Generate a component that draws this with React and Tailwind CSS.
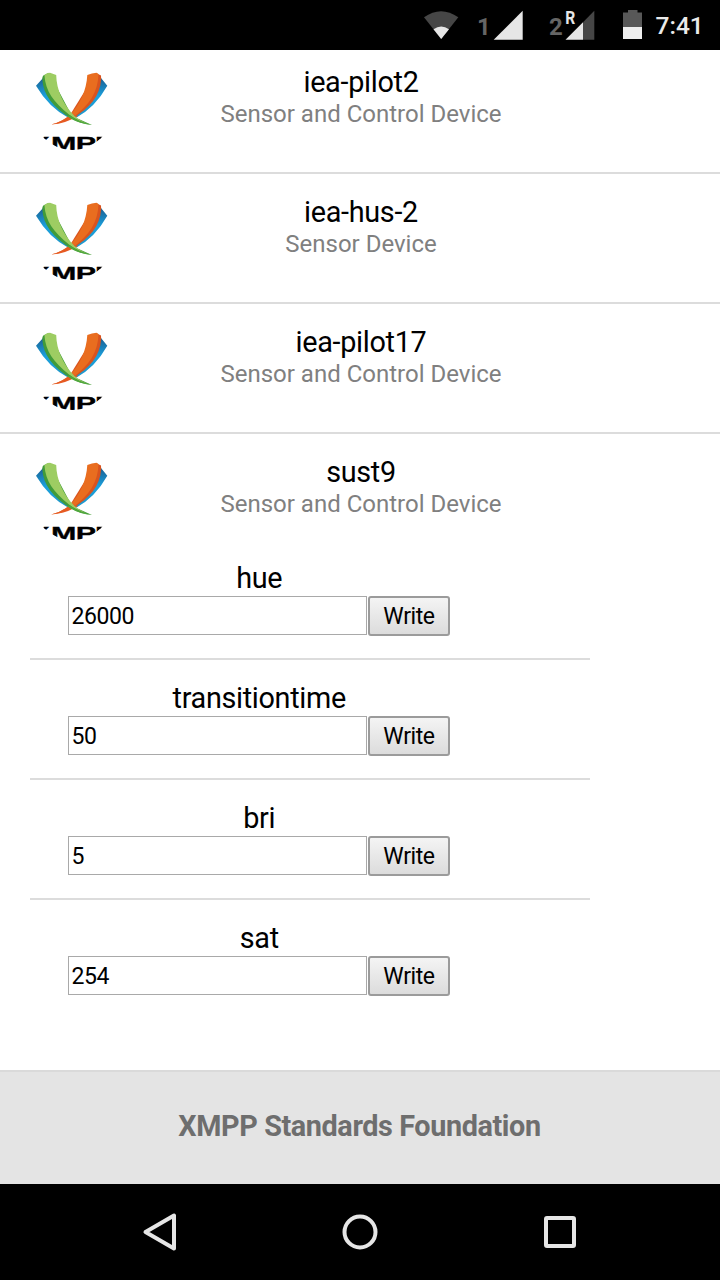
import React from "react";

const devices = [
  { name: "iea-pilot2", kind: "Sensor and Control Device" },
  { name: "iea-hus-2", kind: "Sensor Device" },
  { name: "iea-pilot17", kind: "Sensor and Control Device" },
  { name: "sust9", kind: "Sensor and Control Device" },
];

const fields = [
  { label: "hue", value: "26000" },
  { label: "transitiontime", value: "50" },
  { label: "bri", value: "5" },
  { label: "sat", value: "254" },
];

function Logo() {
  return (
    <svg className="mt-[26px] ml-8 h-20 w-20 shrink-0" viewBox="0 0 80 80">
      <defs>
        <linearGradient id="blue" x1="0" y1="0" x2="0" y2="1">
          <stop offset="0" stopColor="#1b5f93" />
          <stop offset="0.45" stopColor="#1aa0dc" />
          <stop offset="1" stopColor="#2196c9" />
        </linearGradient>
        <clipPath id="disc">
          <circle cx="40.500" cy="40" r="40" />
        </clipPath>
      </defs>
      <path d="M69 8 L75.300 15.800 Q63 38 43 48.500 L39 46 Q64 30 66 10Z" fill="url(#blue)" />
      <path d="M11 8 L4 15.800 Q17 38 37.500 48.500 L40 46 Q16 30 13 10Z" fill="url(#blue)" />
      <path d="M64 3 L69 5.600 L69.200 9 C68 26 58 38 40 48.500 L38 45Z" fill="#d9531e" />
      <path d="M55.300 4.900 Q60 3 64.500 2.700 L66.500 4 C66 23 57 35 41 47.500 Q31 53 19.200 54.500 Q30 52 37.500 45 C48 35 54.500 20 55.300 4.900Z" fill="#e96d1f" />
      <path d="M19.200 54.600 Q34 53.500 46 46 L40 44 Q32 51 19.200 54.600Z" fill="#e65a23" />
      <path d="M17 2.800 L11.300 5.500 Q10.200 6.500 10.300 9 C11 25 21 37 39 48.500 Q48 53.500 60 55 L40 46Z" fill="#409b39" />
      <path d="M12.400 5 Q15 2.700 18 2.700 L24.200 4.900 C24.500 20 31 34 42.500 46 Q49 52 60 55 Q47 52 37 44.500 C22 32 13.500 22 12.400 5Z" fill="#9dcd62" />
      <path d="M38 45.500 Q47 52.500 60 55 Q46 54 35 46Z" fill="#50a83d" />
      <g clipPath="url(#disc)">
        <g
          transform="translate(0 80) scale(1.65 1)"
          fontFamily="Liberation Sans"
          fontWeight="700"
          fontSize="18.5"
          fill="#000"
          stroke="#000"
          strokeWidth="0.3"
        >
          <text x="-1.600">X</text>
          <text x="11.500">M</text>
          <text x="26.500">P</text>
          <text x="38.200">P</text>
        </g>
      </g>
    </svg>
  );
}

function Device({ name, kind }) {
  return (
    <div className="flex h-[130px] items-start">
      <Logo />
      <div className="mt-[22px] w-[498px] text-center">
        <div className="text-[28.8px] leading-8 tracking-[-0.3px] text-black">{name}</div>
        <div className="text-2xl leading-8 text-[#808080]">{kind}</div>
      </div>
    </div>
  );
}

function Field({ label, value }) {
  return (
    <div className="flex h-[120px] flex-col">
      <div className="w-[458.500px] pt-5 text-center text-[28.8px] leading-9 tracking-[-0.32px] text-black">{label}</div>
      <div className="ml-[38px] flex gap-px">
        <input
          readOnly
          value={value}
          className="h-[39px] w-[299px] border border-[#a9a9a9] bg-white px-[2.5px] pt-0.5 text-[23px] tracking-[-0.4px] text-black outline-none"
        />
        <button className="h-10 w-[82px] rounded-[3px] border-2 border-[#9b9b9b] bg-linear-to-b from-[#f4f4f4] to-[#dcdcdc] pt-0.5 text-center text-[23px] leading-[34px] tracking-[-0.4px] text-black">
          Write
        </button>
      </div>
    </div>
  );
}

function StatusBar() {
  return (
    <div className="h-[50px] shrink-0 bg-black">
      <svg width="720" height="50" viewBox="0 0 720 50" fontFamily="Roboto">
        <path d="M424 17.3 Q441 5 458.300 17.300 L441.200 39Z" fill="#464646" />
        <path d="M433.5 29.200 Q441.200 23.800 449 29.200 L441.200 39Z" fill="#e6e6e6" />
        <text x="477" y="35" fontSize="24" fontWeight="700" fill="#656565">1</text>
        <path d="M522.700 10.700V39.700H493.700Z" fill="#e6e6e6" />
        <text x="549" y="35" fontSize="24" fontWeight="700" fill="#656565">2</text>
        <text x="565.300" y="23.700" fontSize="17.500" fontWeight="700" textLength="10" lengthAdjust="spacingAndGlyphs" fill="#e6e6e6">R</text>
        <path d="M594.300 10.700V39.700H583V22.300Z" fill="#464646" />
        <path d="M583 22.300V39.700H565.500Z" fill="#e6e6e6" />
        <path d="M628 10H637.500V12.500H642V27H623V12.500H628Z" fill="#585858" />
        <path d="M623 27H642V39H623Z" fill="#eee" />
        <text x="655.500" y="34" fontSize="24.500" fontWeight="500" fill="#eaeaea">7:41</text>
      </svg>
    </div>
  );
}

export default function App() {
  return (
    <div className="flex h-[1280px] w-[720px] flex-col overflow-hidden bg-white font-[Roboto,sans-serif]">
      <StatusBar />
      <main className="min-h-0 flex-1 overflow-hidden">
        <div className="-mt-1.5 flex flex-col divide-y-2 divide-[#dcdcdc]">
          {devices.map((d) => (
            <Device key={d.name} {...d} />
          ))}
        </div>
        <div className="-mt-6 ml-[30px] flex w-[560px] flex-col divide-y-2 divide-[#dcdcdc]">
          {fields.map((f) => (
            <Field key={f.label} {...f} />
          ))}
        </div>
      </main>
      <footer className="flex h-[114px] shrink-0 items-center justify-center border-t-2 border-[#dadada] bg-[#e4e4e4] pr-px pb-0.5 text-[28.8px] font-bold tracking-[-0.4px] text-[#6e6e6e]">
        XMPP Standards Foundation
      </footer>
      <nav className="flex h-24 shrink-0 items-center justify-center bg-black">
        <svg width="720" height="96" fill="none" stroke="#e6e6e6" strokeWidth="4" strokeLinejoin="round">
          <path d="M174 31.500V64.500L145.500 48Z" />
          <circle cx="360" cy="48" r="15.500" />
          <rect x="546" y="34" width="28" height="28" rx="1" />
        </svg>
      </nav>
    </div>
  );
}
